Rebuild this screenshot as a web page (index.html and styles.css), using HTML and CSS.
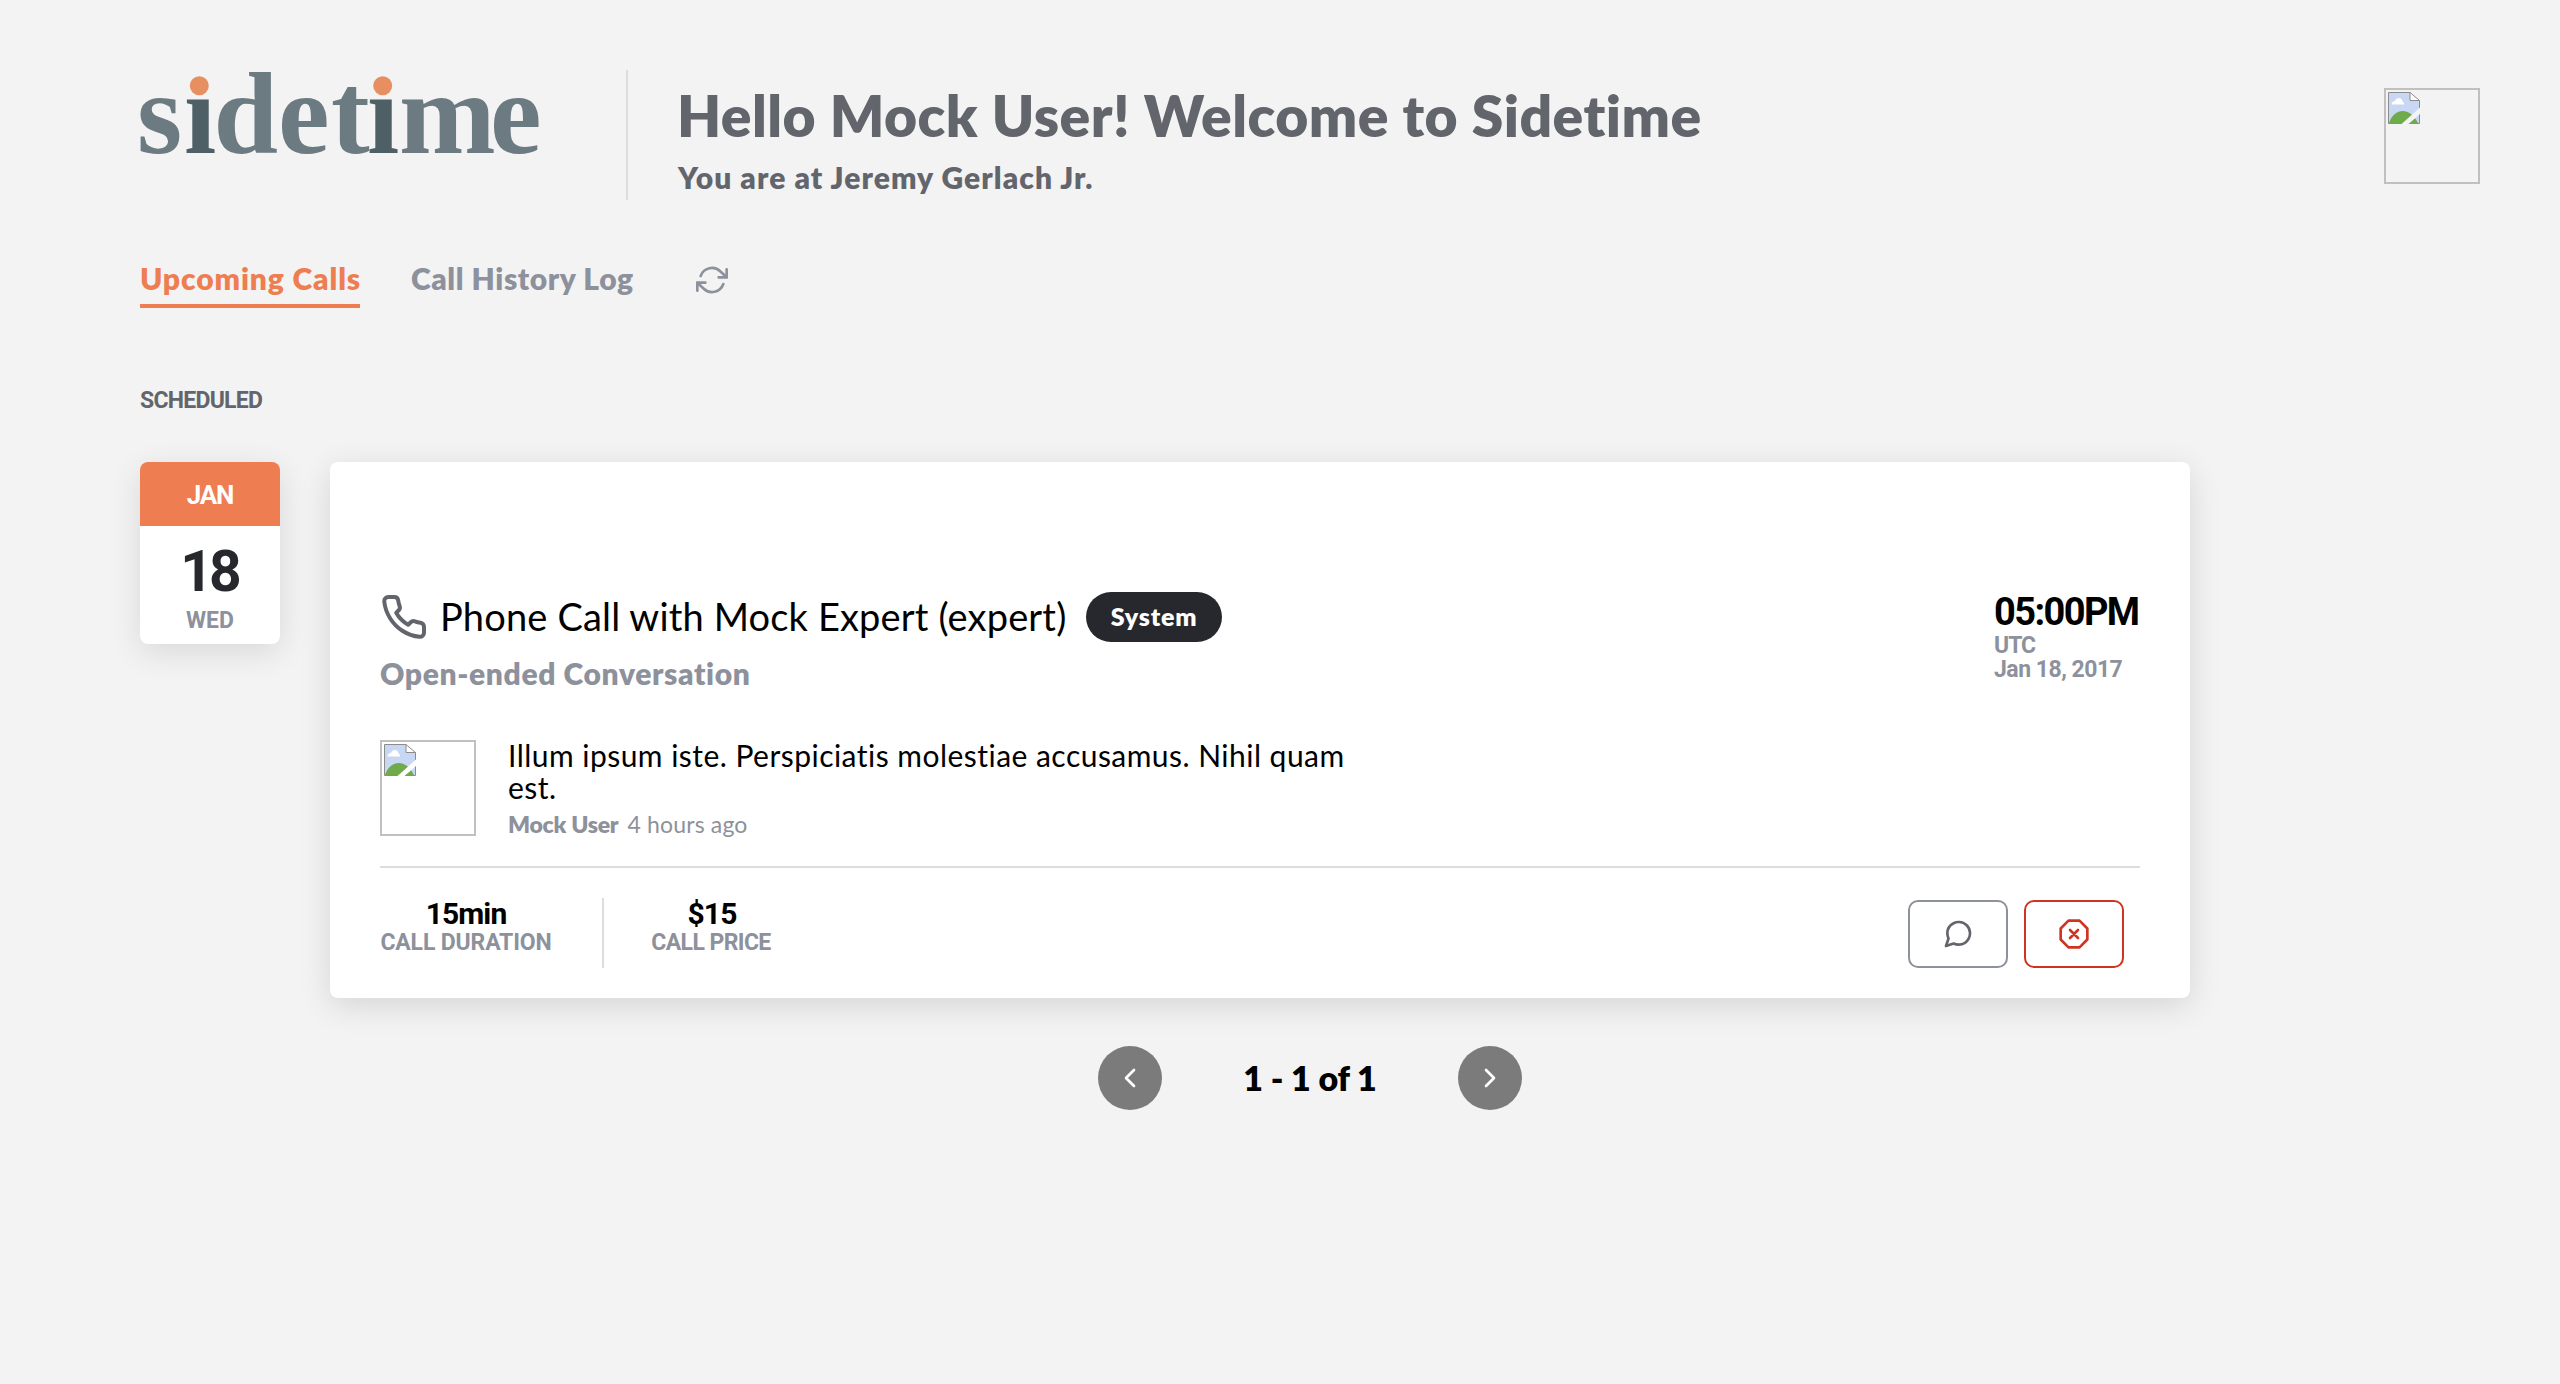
FILE: index.html
```
<!DOCTYPE html>
<html lang="en">
<head>
<meta charset="utf-8">
<title>Sidetime</title>
<link rel="stylesheet" href="styles.css">
</head>
<body>
<svg class="defs" width="0" height="0" aria-hidden="true">
  <symbol id="missing" viewBox="0 0 32 32">
    <path d="M.5 .5H22L31.500 9V31.500H.5Z" fill="#c8d7f3"/>
    <path d="M3.500 12.500c0-2 1.500-3.500 3.500-3.500 1-4 7-4 7.500.5 1.500.5 1.500 2 1.500 3Z" fill="#fff"/>
    <path d="M1 31C6 16 22 14 30 31Z" fill="#70ab4b"/>
    <path d="M22 .5V8.500H31.500Z" fill="#fff"/>
    <path d="M.5 31.500V.5H22L31.500 8.500V31.500ZM22 .5V8.500H31.500" fill="none" stroke="#8c8c8c"/>
    <path class="tear" d="M13.500 32L32 15.500V22L20.500 32Z"/>
  </symbol>
</svg>
<header class="header">
  <svg class="logo" width="400" height="84" viewBox="0 0 400 84">
    <text class="logo-text" y="82.500" x="-3 44 73.500 138 191 227 259 350">s<tspan class="dark">i</tspan>det<tspan class="dark">i</tspan>me</text>
    <path class="gap" d="M45 -2h29v29h-29zM228 -2h29v29h-29z"/>
    <circle class="dot" cx="59.300" cy="15.700" r="9.500"/>
    <circle class="dot" cx="242.700" cy="15.700" r="9.500"/>
  </svg>
  <div class="greeting">
    <h1 class="hello">Hello Mock User! Welcome to Sidetime</h1>
    <p class="place">You are at Jeremy Gerlach Jr.</p>
  </div>
  <div class="avatar"><svg width="32" height="32"><use href="#missing"/></svg></div>
</header>
<nav class="tabs">
  <a class="tab active">Upcoming Calls</a>
  <a class="tab log">Call History Log</a>
  <svg class="icon refresh" width="32" height="32" viewBox="0 0 24 24"><path d="M23 4v6h-6M1 20v-6h6"/><path d="M3.510 9a9 9 0 0 1 14.850-3.360L23 10M1 14l4.640 4.360A9 9 0 0 0 20.490 15"/></svg>
</nav>
<h2 class="section">SCHEDULED</h2>
<main class="row">
  <div class="date">
    <div class="month">JAN</div>
    <div class="day">18</div>
    <div class="weekday">WED</div>
  </div>
  <article class="card">
    <div class="top">
      <div class="info">
        <div class="title-row">
          <svg class="icon phone" width="48" height="48" viewBox="0 0 24 24"><path d="M22 16.920v3a2 2 0 0 1-2.180 2 19.790 19.790 0 0 1-8.630-3.070 19.500 19.500 0 0 1-6-6 19.790 19.790 0 0 1-3.070-8.670A2 2 0 0 1 4.110 2h3a2 2 0 0 1 2 1.720 12.840 12.840 0 0 0 .7 2.810 2 2 0 0 1-.45 2.110L8.090 9.910a16 16 0 0 0 6 6l1.270-1.270a2 2 0 0 1 2.110-.45 12.840 12.840 0 0 0 2.810.7A2 2 0 0 1 22 16.920z"/></svg>
          <span class="title">Phone Call with Mock Expert (expert)</span>
          <span class="badge">System</span>
        </div>
        <p class="kind">Open-ended Conversation</p>
      </div>
      <div class="when">
        <div class="time">05:00PM</div>
        <div class="zone utc">UTC</div>
        <div class="zone">Jan 18, 2017</div>
      </div>
    </div>
    <div class="message">
      <div class="avatar"><svg width="32" height="32"><use href="#missing"/></svg></div>
      <div class="message-body">
        <p class="text">Illum ipsum iste. Perspiciatis molestiae accusamus. Nihil quam est.</p>
        <p class="meta"><b class="author">Mock User</b><span class="ago">4 hours ago</span></p>
      </div>
    </div>
    <div class="footer">
      <div class="stat duration"><div class="value">15min</div><div class="label">CALL DURATION</div></div>
      <div class="stat price"><div class="value">$15</div><div class="label tight">CALL PRICE</div></div>
      <div class="actions">
        <button class="btn chat"><svg class="icon" width="32" height="32" viewBox="0 0 24 24"><path d="M21 11.500a8.380 8.380 0 0 1-.9 3.800 8.500 8.500 0 0 1-7.600 4.700 8.380 8.380 0 0 1-3.800-.9L3 21l1.900-5.700a8.380 8.380 0 0 1-.9-3.800 8.500 8.500 0 0 1 4.700-7.600 8.380 8.380 0 0 1 3.800-.9h.5a8.480 8.480 0 0 1 8 8v.5z"/></svg></button>
        <button class="btn cancel"><svg class="icon" width="32" height="32" viewBox="0 0 24 24"><path d="M7.860 2h8.280L22 7.860v8.280L16.140 22H7.860L2 16.140V7.860zM15 9l-6 6M9 9l6 6"/></svg></button>
      </div>
    </div>
  </article>
</main>
<div class="pager">
  <button class="page"><svg class="icon" width="32" height="32" viewBox="0 0 24 24"><path d="M15 18l-6-6 6-6"/></svg></button>
  <span class="range">1 - 1 of 1</span>
  <button class="page"><svg class="icon" width="32" height="32" viewBox="0 0 24 24"><path d="M9 18l6-6-6-6"/></svg></button>
</div>
</body>
</html>
```
FILE: styles.css
```
* { box-sizing: border-box; }
body { margin: 0; padding: 70px 80px 0 140px; min-height: 1384px; background: #f3f3f3; font-family: Lato, sans-serif; color: #000; }
h1, h2, p { margin: 0; }
button { padding: 0; font: inherit; }
svg { display: block; flex: none; }
.defs { position: absolute; }
.icon { fill: none; stroke: currentColor; stroke-width: 2; stroke-linecap: round; stroke-linejoin: round; }

.header { display: flex; height: 130px; }
.logo { overflow: visible; }
.logo-text { font: 700 116px "Liberation Serif", serif; fill: #6c7a82; }
.logo-text .dark { fill: #4f5f66; }
.gap { fill: #f3f3f3; }
.dot { fill: #e88f61; }
.greeting { margin-left: 86px; padding: 15px 0 0 49px; border-left: 2px solid #dcdce1; color: #62656c; white-space: nowrap; }
.hello { font-size: 57px; line-height: 60px; font-weight: 800; letter-spacing: .45px; }
.place { margin-top: 14px; padding-left: 1px; font-size: 30px; line-height: 36px; font-weight: 800; letter-spacing: 1.07px; }
.avatar { flex: none; width: 96px; height: 96px; padding: 2px; border: 2px solid #c0c0c0; --page: #fff; }
.header .avatar { margin: 18px 0 0 auto; --page: #f3f3f3; }
.tear { fill: var(--page); }

.tabs { display: flex; margin-top: 60px; }
.tab { font-size: 30px; line-height: 37px; font-weight: 800; color: #8d919c; white-space: nowrap; }
.active { width: 220px; height: 48px; border-bottom: 4px solid #ee7d51; color: #ee7d51; letter-spacing: .88px; }
.log { width: 224px; margin-left: 50px; padding-left: 1px; letter-spacing: .58px; }
.refresh { margin: 4px 0 0 62px; color: #8d919c; }

.section { margin-top: 79px; font: 700 23px/28px Roboto, sans-serif; letter-spacing: -.73px; color: #62656c; }
.row { display: flex; align-items: flex-start; gap: 50px; margin-top: 47px; }
.date { width: 140px; height: 182px; border-radius: 8px; overflow: hidden; background: #fff; text-align: center; box-shadow: 0 8px 32px rgba(0,0,0,.11); }
.month { height: 64px; background: #ee7d51; color: #fff; font: 700 26px/67px Roboto, sans-serif; letter-spacing: -1.2px; }
.day { margin-top: 15px; font: 700 57px/61px Roboto, sans-serif; letter-spacing: -4px; text-indent: -2px; color: #27282d; }
.weekday { margin-top: 7px; font: 700 23px/24px Roboto, sans-serif; color: #8d919c; }

.card { width: 1860px; height: 536px; padding: 128px 50px 0; border-radius: 8px; background: #fff; box-shadow: 0 8px 32px rgba(0,0,0,.12); }
.top { display: flex; justify-content: space-between; }
.title-row { display: flex; align-items: center; height: 50px; margin-top: 2px; }
.phone { color: #62656c; }
.title { width: 658px; padding-left: 12px; font-size: 38px; line-height: 46px; margin-top: -2px; letter-spacing: .16px; white-space: nowrap; }
.badge { width: 136px; height: 50px; border-radius: 25px; background: #27282d; color: #fff; font-size: 25px; line-height: 49px; font-weight: 800; letter-spacing: .8px; text-align: center; }
.kind { margin-top: 13px; font-size: 30px; line-height: 36px; font-weight: 800; letter-spacing: .62px; color: #8d919c; }
.when { width: 146px; white-space: nowrap; }
.time { padding-top: 2px; font: 700 38px/40px Roboto, sans-serif; letter-spacing: -1.6px; }
.zone { font: 700 23px/24px Roboto, sans-serif; letter-spacing: -.5px; color: #8d919c; }
.utc { margin-top: 2px; letter-spacing: -1px; }

.message { display: flex; gap: 32px; margin-top: 48px; }
.message-body { width: 870px; margin-top: -1px; }
.text { font-size: 30px; line-height: 32px; letter-spacing: .47px; }
.meta { display: flex; gap: 9px; margin-top: 7px; font-size: 23px; line-height: 28px; color: #8d919c; }
.author { font-weight: 800; letter-spacing: -.25px; }
.ago { letter-spacing: .17px; }

.info { padding-bottom: 1px; }
.footer { display: flex; margin-top: 28px; padding-top: 30px; border-top: 2px solid #dcdce1; }
.stat { height: 70px; text-align: center; white-space: nowrap; }
.duration { width: 224px; padding-right: 50px; border-right: 2px solid #dcdce1; }
.price { width: 120px; margin-left: 48px; }
.value { font: 700 30px/31px Roboto, sans-serif; letter-spacing: -.9px; }
.label { padding-top: 1px; font: 700 23px/26px Roboto, sans-serif; letter-spacing: -.15px; color: #8d919c; }
.tight { letter-spacing: -.6px; text-indent: -2px; }
.actions { display: flex; gap: 16px; margin: 2px 16px 0 auto; }
.btn { display: flex; align-items: center; justify-content: center; width: 100px; height: 68px; border: 2px solid #8d919c; border-radius: 10px; background: #fff; color: #62656c; }
.cancel { border-color: #d03420; color: #d03420; }

.pager { display: flex; align-items: center; width: 424px; margin: 48px 0 0 958px; }
.page { display: flex; flex: none; align-items: center; justify-content: center; width: 64px; height: 64px; border: 0; border-radius: 50%; background: #7b7b7b; color: #fff; }
.range { flex: 1; font-size: 34px; line-height: 40px; font-weight: 800; letter-spacing: -.1px; text-align: center; }
```
